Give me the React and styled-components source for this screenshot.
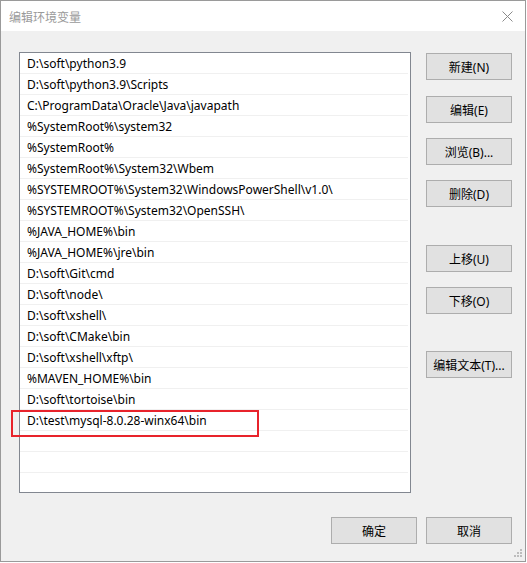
import styled, { createGlobalStyle } from 'styled-components'

const GlobalStyle = createGlobalStyle`
  html, body {
    margin: 0;
    padding: 0;
    background: #ffffff;
  }
  body {
    font-family: 'Noto Sans', 'Noto Sans CJK SC', sans-serif;
    font-size: 12px;
  }
`

const Window = styled.div`
  position: relative;
  box-sizing: border-box;
  width: 526px;
  height: 562px;
  border: 1px solid #9a9a9a;
  background: #f0f0f0;
  display: flex;
  flex-direction: column;
`

const TitleBar = styled.div`
  height: 30px;
  background: #ffffff;
  display: flex;
  align-items: center;
  justify-content: space-between;
  padding: 0 12px 0 8px;
`

const Title = styled.span`
  color: #9a9a9a;
  font-family: 'Noto Sans CJK SC', sans-serif;
  font-size: 12px;
`

const Body = styled.div`
  flex: 1;
  display: flex;
  flex-direction: column;
  padding: 21px 13px 0 18px;
`

const Main = styled.div`
  display: flex;
  gap: 15px;
`

const ListBox = styled.div`
  box-sizing: border-box;
  width: 392px;
  height: 441px;
  border: 1px solid #828790;
  background: #ffffff;
  overflow: hidden;
`

const Row = styled.div`
  box-sizing: border-box;
  height: 21px;
  line-height: 18px;
  padding: 2px 0 0 7px;
  margin-right: 2px;
  border-bottom: 1px solid #f0f0f0;
  color: #000;
  white-space: nowrap;
`

const ButtonColumn = styled.div`
  display: flex;
  flex-direction: column;
  padding-top: 1px;
`

const Button = styled.button`
  box-sizing: border-box;
  width: 86px;
  height: 27px;
  margin-top: ${(p) => p.$top || 0}px;
  background: #e1e1e1;
  border: 1px solid #adadad;
  padding: 0;
  font-family: 'Noto Sans', 'Noto Sans CJK SC', sans-serif;
  font-size: 12px;
  color: #000;
  cursor: default;
`

const Footer = styled.div`
  display: flex;
  justify-content: flex-end;
  gap: 9px;
  margin-top: 24px;
`

const Highlight = styled.div`
  position: absolute;
  left: 10px;
  top: 409px;
  width: 248px;
  height: 27px;
  box-sizing: border-box;
  border: 2px solid #e8232b;
  pointer-events: none;
`

const Grip = styled.svg`
  position: absolute;
  right: 2px;
  bottom: 3px;
`

const paths = [
  'D:\\soft\\python3.9',
  'D:\\soft\\python3.9\\Scripts',
  'C:\\ProgramData\\Oracle\\Java\\javapath',
  '%SystemRoot%\\system32',
  '%SystemRoot%',
  '%SystemRoot%\\System32\\Wbem',
  '%SYSTEMROOT%\\System32\\WindowsPowerShell\\v1.0\\',
  '%SYSTEMROOT%\\System32\\OpenSSH\\',
  '%JAVA_HOME%\\bin',
  '%JAVA_HOME%\\jre\\bin',
  'D:\\soft\\Git\\cmd',
  'D:\\soft\\node\\',
  'D:\\soft\\xshell\\',
  'D:\\soft\\CMake\\bin',
  'D:\\soft\\xshell\\xftp\\',
  '%MAVEN_HOME%\\bin',
  'D:\\soft\\tortoise\\bin',
  'D:\\test\\mysql-8.0.28-winx64\\bin',
  '',
  '',
  '',
]

const sideButtons = [
  { label: '新建(N)', top: 0 },
  { label: '编辑(E)', top: 16 },
  { label: '浏览(B)...', top: 15 },
  { label: '删除(D)', top: 15 },
  { label: '上移(U)', top: 38 },
  { label: '下移(O)', top: 15 },
  { label: '编辑文本(T)...', top: 37 },
]

export default function App() {
  return (
    <>
      <GlobalStyle />
      <Window>
        <TitleBar>
          <Title>编辑环境变量</Title>
          <svg width='11' height='11' viewBox='0 0 11 11'>
            <path d='M0.5 0.5 L10.5 10.5 M10.5 0.5 L0.5 10.5' stroke='#8a8a8a' strokeWidth='1' />
          </svg>
        </TitleBar>
        <Body>
          <Main>
            <ListBox>
              {paths.map((p, i) => (
                <Row key={i}>{p}</Row>
              ))}
            </ListBox>
            <ButtonColumn>
              {sideButtons.map((b) => (
                <Button key={b.label} $top={b.top}>
                  {b.label}
                </Button>
              ))}
            </ButtonColumn>
          </Main>
          <Footer>
            <Button>确定</Button>
            <Button>取消</Button>
          </Footer>
        </Body>
        <Highlight />
        <Grip width='9' height='9' viewBox='0 0 9 9'>
          {[
            [6, 0],
            [3, 3],
            [6, 3],
            [0, 6],
            [3, 6],
            [6, 6],
          ].map(([x, y]) => (
            <rect key={`${x}-${y}`} x={x} y={y} width='2' height='2' fill='#bdbdbd' />
          ))}
        </Grip>
      </Window>
    </>
  )
}
